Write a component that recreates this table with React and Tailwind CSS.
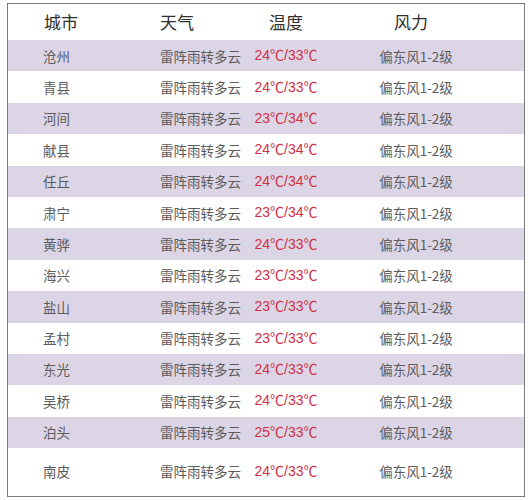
import React from 'react';

const rows = [
  ['沧州', '24℃/33℃'],
  ['青县', '24℃/33℃'],
  ['河间', '23℃/34℃'],
  ['献县', '24℃/34℃'],
  ['任丘', '24℃/34℃'],
  ['肃宁', '23℃/34℃'],
  ['黄骅', '24℃/33℃'],
  ['海兴', '23℃/33℃'],
  ['盐山', '23℃/33℃'],
  ['孟村', '23℃/33℃'],
  ['东光', '24℃/33℃'],
  ['吴桥', '24℃/33℃'],
  ['泊头', '25℃/33℃'],
  ['南皮', '24℃/33℃'],
];

export default function App() {
  return (
    <div className="w-[530px] h-[500px] bg-white pl-[7px] pt-[3px] font-['Noto_Sans_CJK_SC','Noto_Sans',sans-serif]">
      <div className="w-[518px] h-[494px] border border-[#7a7a7a] flex flex-col">
        {/* header */}
        <div className="flex items-center h-[36px] text-[17px] text-[#2e2e2e]">
          <div className="w-[152px] pl-[36px]">城市</div>
          <div className="w-[86px]">天气</div>
          <div className="w-[80px] text-center">温度</div>
          <div className="w-[170px] text-center">风力</div>
        </div>

        {rows.map(([city, temp], i) => (
          <div
            key={city}
            className={`flex items-center text-[13.5px] text-[#5c5c5c] ${
              i % 2 === 0 ? 'bg-[#dcd5e6]' : 'bg-white'
            } ${i === rows.length - 1 ? 'flex-1 items-start pt-[13px]' : 'h-[31.4px]'}`}
          >
            <div className="w-[152px] pl-[35px]">{city}</div>
            <div className="w-[86px]">雷阵雨转多云</div>
            <div className="w-[80px] text-center text-[#d12f47] font-['Liberation_Sans','Noto_Sans_CJK_SC',sans-serif] text-[14px]">{temp}</div>
            <div className="w-[180px] text-center">偏东风1-2级</div>
          </div>
        ))}
      </div>
    </div>
  );
}
